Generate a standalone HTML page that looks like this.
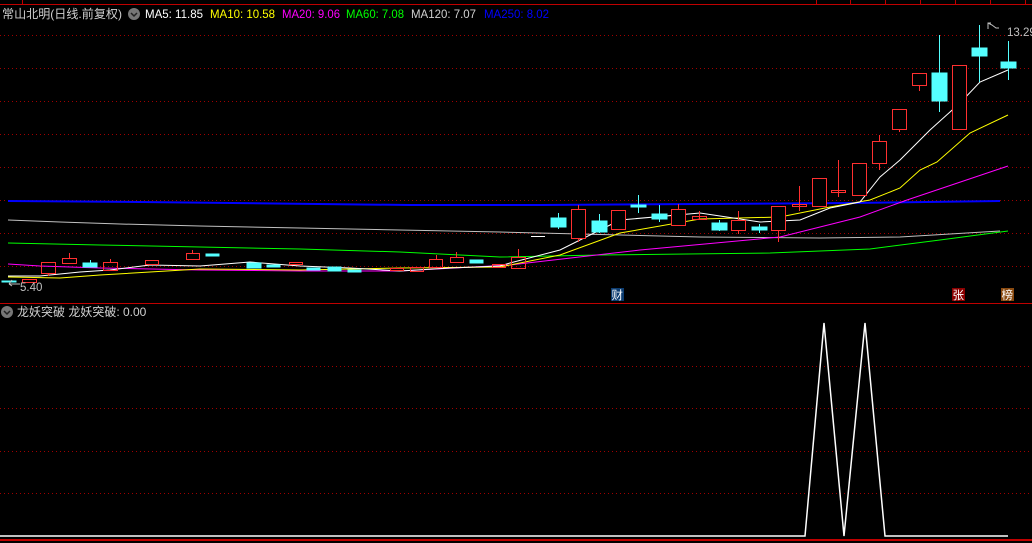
<!DOCTYPE html>
<html><head><meta charset="utf-8"><style>
html,body{margin:0;padding:0;background:#000;width:1032px;height:543px;overflow:hidden}
svg{display:block}
text{font-family:"Liberation Sans","Noto Sans CJK SC",sans-serif}
</style></head><body>
<svg width="1032" height="543" viewBox="0 0 1032 543" xmlns="http://www.w3.org/2000/svg">
<rect width="1032" height="543" fill="#000"/>
<line x1="0" y1="4.5" x2="1032" y2="4.5" stroke="#c00000"/>
<g stroke="#c00000">
<line x1="22.5" y1="0" x2="22.5" y2="4"/><line x1="816.5" y1="0" x2="816.5" y2="4"/><line x1="850.5" y1="0" x2="850.5" y2="4"/><line x1="885.5" y1="0" x2="885.5" y2="4"/><line x1="920.5" y1="0" x2="920.5" y2="4"/><line x1="955.5" y1="0" x2="955.5" y2="4"/><line x1="990.5" y1="0" x2="990.5" y2="4"/><line x1="1025.5" y1="0" x2="1025.5" y2="4"/>
</g>
<g stroke="#a00000" stroke-dasharray="1 3">
<line x1="0" y1="35.5" x2="1032" y2="35.5"/><line x1="0" y1="68.5" x2="1032" y2="68.5"/><line x1="0" y1="101.5" x2="1032" y2="101.5"/><line x1="0" y1="134.5" x2="1032" y2="134.5"/><line x1="0" y1="167.5" x2="1032" y2="167.5"/><line x1="0" y1="200.5" x2="1032" y2="200.5"/><line x1="0" y1="233.5" x2="1032" y2="233.5"/><line x1="0" y1="266.5" x2="1032" y2="266.5"/>
<line x1="0" y1="366.5" x2="1032" y2="366.5"/><line x1="0" y1="408.5" x2="1032" y2="408.5"/><line x1="0" y1="451.5" x2="1032" y2="451.5"/><line x1="0" y1="493.5" x2="1032" y2="493.5"/>
</g>
<line x1="0" y1="303.5" x2="1032" y2="303.5" stroke="#c00000"/>
<line x1="0" y1="540" x2="1032" y2="540" stroke="#c00000" stroke-width="2"/>
<g fill="none" stroke-width="1">
<polyline stroke="#0000ff" stroke-width="2" points="8,201 140,202 410,205 540,205 700,204 850,203 1000,201"/>
<polyline stroke="#c0c0c0" points="8,220 60,222 120,224 200,226 300,228 400,230 500,232 700,237 820,238 900,237 1000,231"/>
<polyline stroke="#00ff00" points="8,243 100,245 200,247 300,249 400,252 500,257 600,255 770,253 870,249 940,240 1008,231"/>
<polyline stroke="#ff00ff" points="8,264 40,266 100,268 200,270 300,271 400,271 510,265 640,250 780,237 860,217 907,200 1008,166"/>
<polyline stroke="#ffff00" points="8,277 60,278 100,275 150,272 200,269 300,270 400,268 500,267 560,255 620,233 700,219 780,217 830,207 870,200 900,188 920,170 937,162 970,133 1008,115"/>
<polyline stroke="#ffffff" points="8,276 40,276 80,272 110,270 150,265 200,266 250,262 300,266 350,268 400,271 450,268 500,266 510,263 560,250 620,220 700,213 760,222 800,220 830,208 860,202 880,177 900,160 930,130 960,103 980,82 1008,70"/>
</g>
<g stroke="#ff3030" fill="none">
<line x1="518.5" y1="249" x2="518.5" y2="257"/><rect x="511.5" y="257.5" width="14" height="11"/>
<line x1="578.5" y1="205" x2="578.5" y2="242"/><rect x="571.5" y="209.5" width="14" height="29" fill="#000"/>
<rect x="611.5" y="210.5" width="14" height="19" fill="#000"/>
<line x1="678.5" y1="204" x2="678.5" y2="209"/><rect x="671.5" y="209.5" width="14" height="16" fill="#000"/>
<line x1="699.5" y1="211" x2="699.5" y2="220"/><rect x="692.5" y="216.5" width="14" height="3"/>
<line x1="738.5" y1="211" x2="738.5" y2="234"/><rect x="731.5" y="220.5" width="14" height="10" fill="#000"/>
<line x1="778.5" y1="230" x2="778.5" y2="242"/><rect x="771.5" y="206.5" width="14" height="24" fill="#000"/>
<line x1="799.5" y1="186" x2="799.5" y2="211"/><rect x="792.5" y="204.5" width="14" height="2"/>
<rect x="812.5" y="178.5" width="14" height="28" fill="#000"/>
<line x1="838.5" y1="160" x2="838.5" y2="197"/><rect x="831.5" y="190.5" width="14" height="2"/>
<rect x="852.5" y="163.5" width="14" height="32" fill="#000"/>
<line x1="879.5" y1="135" x2="879.5" y2="170"/><rect x="872.5" y="141.5" width="14" height="22" fill="#000"/>
<line x1="899.5" y1="129" x2="899.5" y2="132"/><rect x="892.5" y="109.5" width="14" height="20" fill="#000"/>
<line x1="919.5" y1="85" x2="919.5" y2="91"/><rect x="912.5" y="73.5" width="14" height="12" fill="#000"/>
<rect x="952.5" y="65.5" width="14" height="64" fill="#000"/>
<rect x="41.5" y="262.5" width="14" height="11"/><line x1="48.5" y1="273" x2="48.5" y2="276"/>
<line x1="69.5" y1="253" x2="69.5" y2="258"/><rect x="62.5" y="258.5" width="14" height="5"/>
<line x1="110.5" y1="259" x2="110.5" y2="262"/><rect x="103.5" y="262.5" width="14" height="8"/>
<rect x="22.5" y="279.5" width="14" height="3"/>
<rect x="145.5" y="260.5" width="13" height="4"/>
<rect x="186.5" y="253.5" width="13" height="6"/><line x1="192.5" y1="250" x2="192.5" y2="253"/>
<rect x="289.5" y="262.5" width="13" height="2"/>
<rect x="390.5" y="268.5" width="13" height="2"/>
<rect x="410.5" y="267.5" width="13" height="4"/>
<rect x="429.5" y="259.5" width="13" height="8"/><line x1="436.5" y1="255" x2="436.5" y2="259"/>
<rect x="450.5" y="257.5" width="13" height="5"/><line x1="456.5" y1="252" x2="456.5" y2="257"/>
<rect x="492.5" y="264.5" width="13" height="3"/>
</g>
<g fill="#55ffff" stroke="#55ffff">
<line x1="979.5" y1="25" x2="979.5" y2="82"/><rect x="972" y="48" width="15" height="8"/>
<line x1="1008.5" y1="41" x2="1008.5" y2="80"/><rect x="1001" y="62" width="15" height="6"/>
<line x1="939.5" y1="35" x2="939.5" y2="112"/><rect x="932" y="73" width="15" height="28"/>
<line x1="759.5" y1="224" x2="759.5" y2="233"/><rect x="752" y="227" width="15" height="3"/>
<line x1="719.5" y1="220" x2="719.5" y2="231"/><rect x="712" y="223" width="15" height="7"/>
<line x1="659.5" y1="205" x2="659.5" y2="222"/><rect x="652" y="214" width="15" height="5"/>
<line x1="638.5" y1="195" x2="638.5" y2="213"/><rect x="631" y="205" width="15" height="2"/>
<line x1="599.5" y1="214" x2="599.5" y2="233"/><rect x="592" y="221" width="15" height="11"/>
<line x1="558.5" y1="213" x2="558.5" y2="229"/><rect x="551" y="218" width="15" height="9"/>
<rect x="83" y="263" width="14" height="4"/><line x1="90.5" y1="260" x2="90.5" y2="263"/>
<rect x="206" y="254" width="13" height="2"/>
<rect x="247" y="263" width="14" height="5"/>
<rect x="267" y="265" width="13" height="2"/>
<rect x="307" y="268" width="13" height="2"/>
<rect x="328" y="267" width="13" height="4"/>
<rect x="348" y="270" width="13" height="2"/>
<rect x="470" y="260" width="13" height="3"/>
<rect x="2" y="281" width="14" height="1"/>
</g>
<line x1="531" y1="236.5" x2="545" y2="236.5" stroke="#fff"/>
<text x="2" y="18" font-size="12" fill="#d0d0d0" textLength="120" lengthAdjust="spacingAndGlyphs">常山北明(日线.前复权)</text>
<circle cx="134" cy="14" r="6" fill="#777"/><path d="M131 13l3 3 3-3" stroke="#222" stroke-width="1.5" fill="none"/>
<text x="145" y="18" font-size="12" fill="#fff" textLength="58" lengthAdjust="spacingAndGlyphs">MA5: 11.85</text>
<text x="210" y="18" font-size="12" fill="#ffff00" textLength="65" lengthAdjust="spacingAndGlyphs">MA10: 10.58</text>
<text x="282" y="18" font-size="12" fill="#ff00ff" textLength="58" lengthAdjust="spacingAndGlyphs">MA20: 9.06</text>
<text x="346" y="18" font-size="12" fill="#00ff00" textLength="58" lengthAdjust="spacingAndGlyphs">MA60: 7.08</text>
<text x="411" y="18" font-size="12" fill="#d0d0d0" textLength="65" lengthAdjust="spacingAndGlyphs">MA120: 7.07</text>
<text x="484" y="18" font-size="12" fill="#0000ff" textLength="65" lengthAdjust="spacingAndGlyphs">MA250: 8.02</text>
<text x="1007" y="36" font-size="11.5" fill="#c0c0c0">13.29</text>
<path d="M988 29v-6h3M988 23l4 2 4 3 3 0" stroke="#c0c0c0" fill="none"/>
<text x="20" y="291" font-size="11.5" fill="#c0c0c0">5.40</text>
<path d="M9 284l3-4M9 284l3 2M9 284h11" stroke="#c0c0c0" fill="none"/>
<rect x="611" y="288" width="13" height="13" fill="#0c3c70"/><text x="611.5" y="299" font-size="11.5" fill="#fff">财</text>
<rect x="952" y="288" width="13" height="13" fill="#8a0000"/><text x="952.5" y="299" font-size="11.5" fill="#fff">张</text>
<rect x="1001" y="288" width="13" height="13" fill="#8a4a10"/><text x="1001.5" y="299" font-size="11.5" fill="#fff">榜</text>
<circle cx="7" cy="312" r="6" fill="#777"/><path d="M4 311l3 3 3-3" stroke="#222" stroke-width="1.5" fill="none"/>
<text x="17" y="316" font-size="12" fill="#d0d0d0">龙妖突破  龙妖突破: 0.00</text>
<polyline fill="none" stroke="#fff" stroke-width="1.5" points="0,536 805,536 824,323 844,536 865,323 885,536 1008,536"/>
</svg>
</body></html>
